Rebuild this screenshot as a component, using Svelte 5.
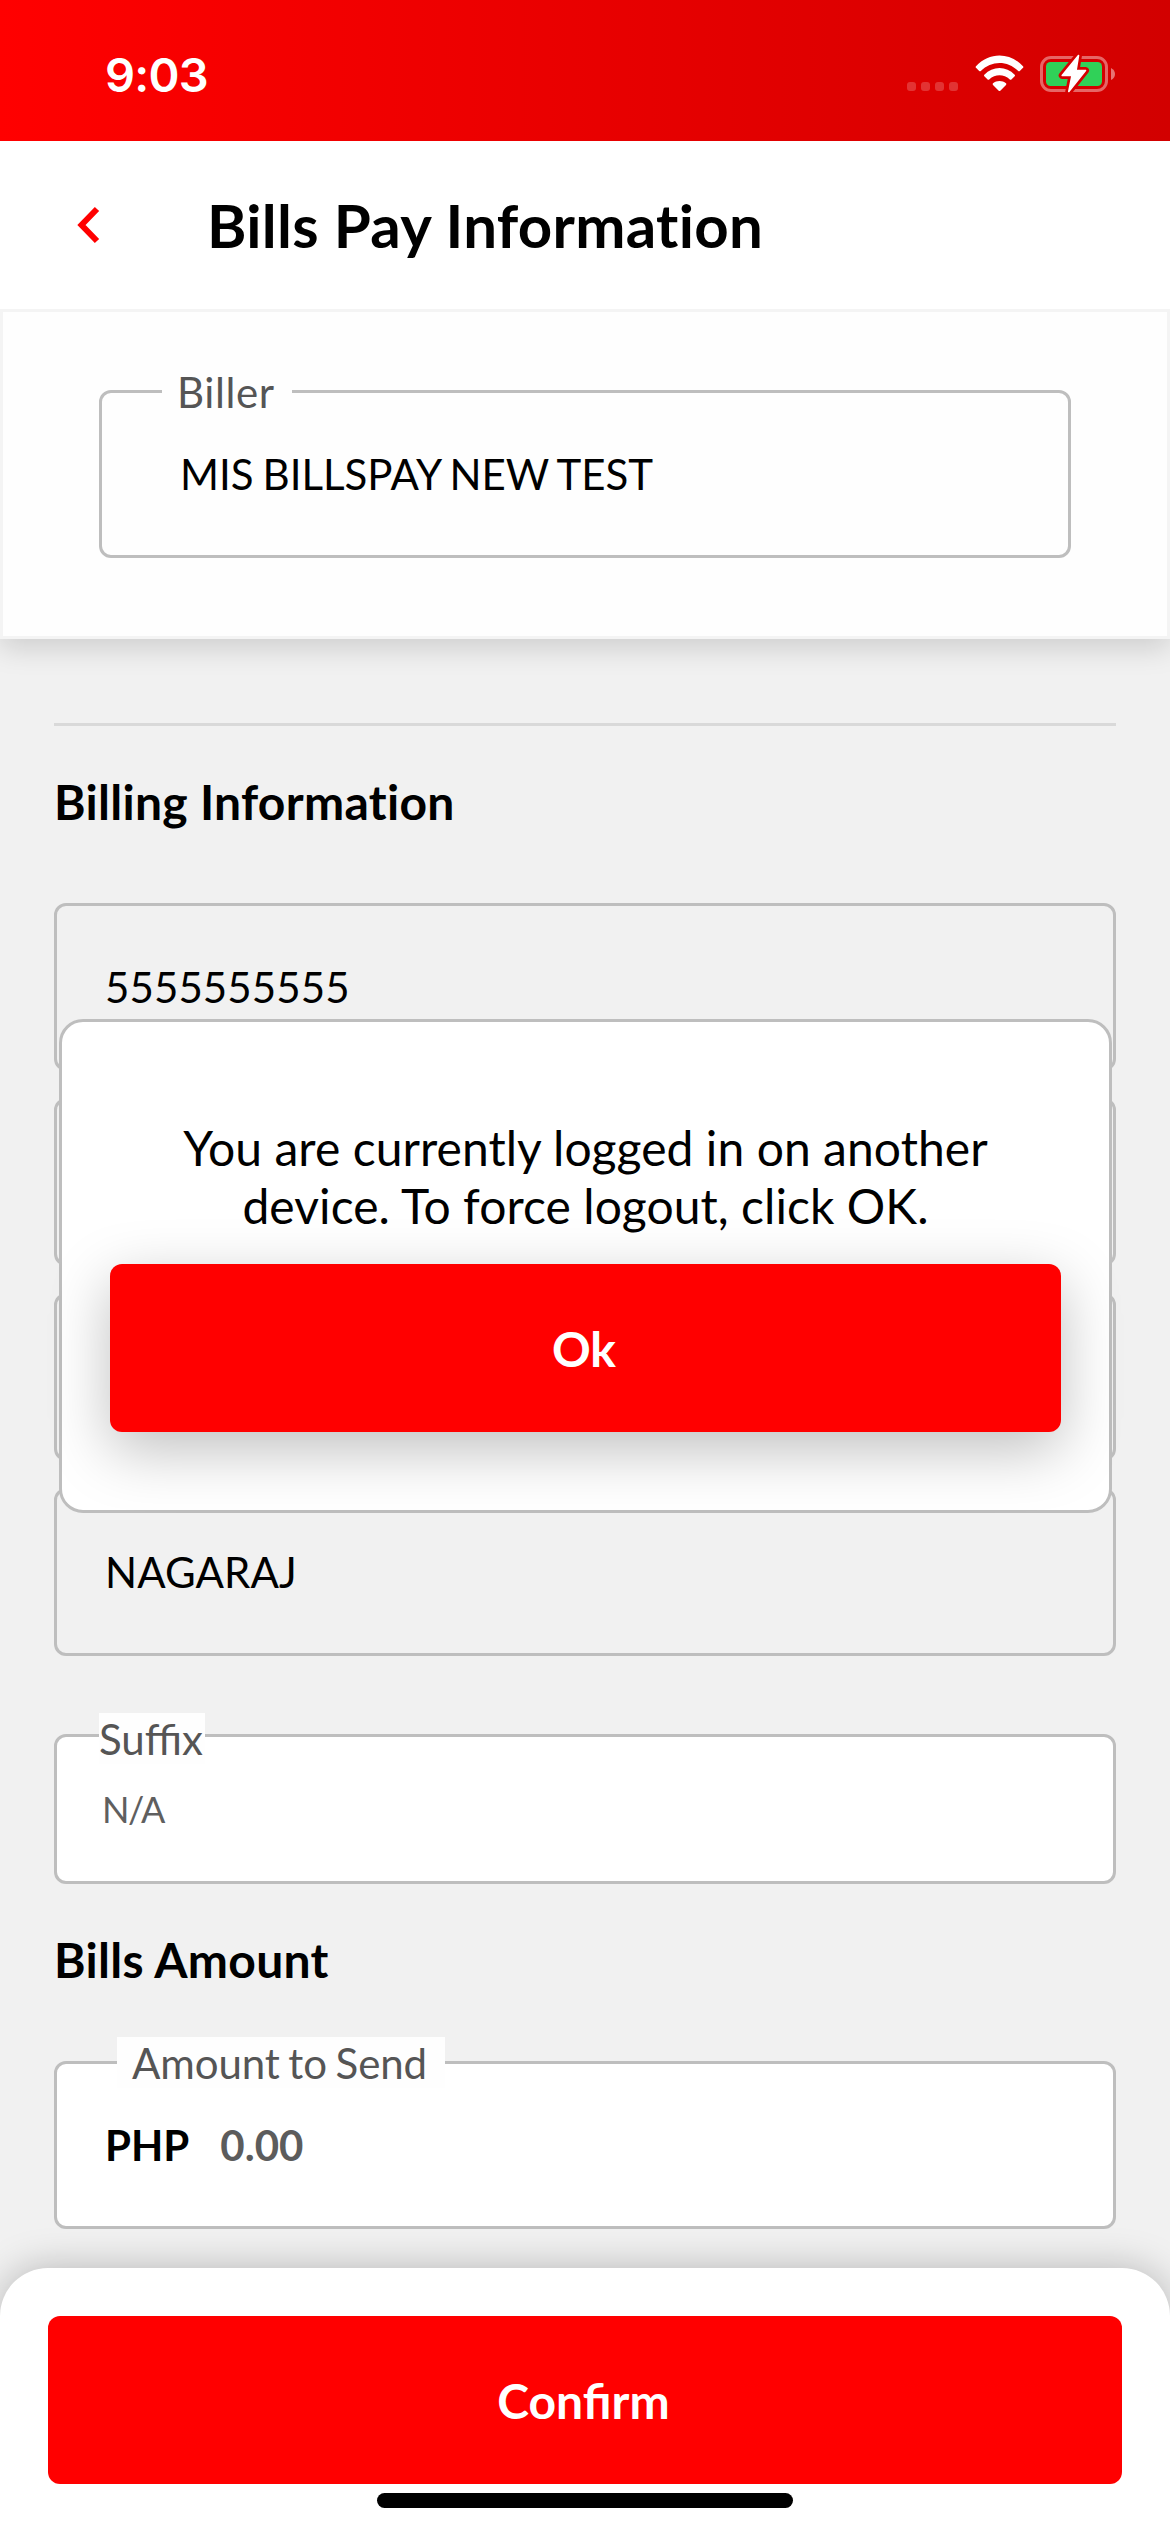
<script>
  const billing = ['5555555555', '', '', 'NAGARAJ'];
  const signalDots = [0, 1, 2, 3];
</script>

<div class="screen">
  <div class="status">
    <span class="time">9:03</span>
    <div class="indicators">
      <div class="signal">
        {#each signalDots as dot (dot)}<i></i>{/each}
      </div>
      <svg class="wifi" width="49" height="37" viewBox="0 0 49 37" fill="#fff">
        <path d="M1 11.2 C14 -3.2 35 -3.2 48 11.2 Q48.8 12 48 12.8 L44.8 16 Q44 16.7 43.2 15.9 C32.5 5.2 16.5 5.2 5.8 15.9 Q5 16.7 4.2 16 L1 12.8 Q.2 12 1 11.2Z" />
        <path d="M9.3 19.7 C17.7 10.8 31.3 10.8 39.7 19.7 Q40.4 20.5 39.7 21.2 L36.4 24.4 Q35.6 25.1 34.8 24.4 C28.8 18.9 20.2 18.9 14.2 24.4 Q13.4 25.1 12.6 24.4 L9.3 21.2 Q8.6 20.5 9.3 19.7Z" />
        <path d="M18 28.3 C21.6 25.1 27.4 25.1 31 28.3 Q31.8 29.1 31 29.9 L25.3 35.7 Q24.5 36.4 23.7 35.7 L18 29.9 Q17.2 29.1 18 28.3Z" />
      </svg>
      <svg class="battery" width="76" height="40" viewBox="0 0 76 40">
        <defs>
          <mask id="bolt-gap">
            <rect width="76" height="40" fill="#fff" />
            <path d="M38.5 2.5 L22.2 22.5 H32 L28.8 38.5 L45.5 17.5 H36 Z" fill="#000" stroke="#000" stroke-width="7" stroke-linejoin="round" />
          </mask>
        </defs>
        <g mask="url(#bolt-gap)">
          <rect x="1.5" y="4.5" width="65" height="33" rx="9.5" fill="none" stroke="#fff" stroke-opacity=".4" stroke-width="3" />
          <rect x="6" y="9" width="56" height="24" rx="4.5" fill="#30d158" />
        </g>
        <path d="M71 15 Q75 17 75 21 Q75 25 71 27Z" fill="#fff" fill-opacity=".45" />
        <path d="M38.5 2.5 L22.2 22.5 H32 L28.8 38.5 L45.5 17.5 H36 Z" fill="#fff" stroke="#fff" stroke-width="1.6" stroke-linejoin="round" />
      </svg>
    </div>
  </div>

  <header>
    <svg class="back" width="24" height="38" viewBox="0 0 24 38" fill="none" stroke="#f00" stroke-width="6">
      <path d="M21 3 L5.5 19 L21 35" />
    </svg>
    <h1>Bills Pay Information</h1>
  </header>

  <section class="biller">
    <div class="field">
      <span class="label">Biller</span>
      <span class="value">MIS BILLSPAY NEW TEST</span>
    </div>
  </section>

  <main>
    <hr />
    <h2>Billing Information</h2>
    <div class="stack">
      {#each billing as value, index (index)}
        <div class="field"><span class="value">{value}</span></div>
      {/each}
    </div>
    <div class="field white suffix">
      <span class="label">Suffix</span>
      <span class="value">N/A</span>
    </div>
    <h2 class="amount-title">Bills Amount</h2>
    <div class="field white amount">
      <span class="label">Amount to Send</span>
      <span class="currency">PHP</span>
      <span class="zero">0.00</span>
    </div>
  </main>

  <footer>
    <button>Confirm</button>
    <div class="home"></div>
  </footer>

  <div class="modal" role="dialog">
    <p>You are currently logged in on another<br />device. To force logout, click OK.</p>
    <button>Ok</button>
  </div>
</div>

<style>
  :global(body) {
    margin: 0;
  }
  .screen,
  .screen * {
    box-sizing: border-box;
  }
  .screen {
    position: relative;
    display: flex;
    flex-direction: column;
    width: 1170px;
    height: 2532px;
    overflow: hidden;
    background: #f1f1f1;
    color: #000;
    font-family: Lato, sans-serif;
    font-size: 42px;
    line-height: 1.2;
  }
  .status {
    display: flex;
    justify-content: space-between;
    height: 141px;
    padding: 53px 54px 0 105px;
    background: linear-gradient(90deg, #f00, #d20000);
    color: #fff;
  }
  .time {
    font: 560 47px/44px Inter, sans-serif;
    letter-spacing: -0.8px;
  }
  .indicators {
    display: flex;
    align-items: flex-start;
  }
  .signal {
    display: flex;
    gap: 5px;
    margin: 29px 17px 0 0;
  }
  .signal i {
    width: 9px;
    height: 9px;
    border-radius: 3px;
    background: rgba(255, 255, 255, 0.2);
  }
  .wifi {
    margin: 2px 16px 0 0;
  }
  header {
    position: relative;
    z-index: 1;
    display: flex;
    align-items: center;
    height: 168px;
    padding-left: 76px;
    background: #fff;
  }
  .back {
    margin-right: 107px;
  }
  h1,
  h2,
  p {
    margin: 0;
  }
  h1,
  h2 {
    font-variant-ligatures: none;
    letter-spacing: 0.3px;
  }
  h1 {
    font-size: 60px;
    font-weight: 700;
    line-height: 72px;
  }
  .biller {
    height: 330px;
    padding: 78px 96px 0;
    border: 3px solid #f4f4f4;
    background: #fefefe;
    box-shadow: 0 9px 27px rgba(0, 0, 0, 0.15);
  }
  .field {
    position: relative;
    display: flex;
    align-items: center;
    height: 168px;
    padding-left: 48px;
    border: 3px solid #bebebe;
    border-radius: 12px;
  }
  .biller .field {
    padding-left: 78px;
    word-spacing: -1.8px;
  }
  .biller .label {
    padding-right: 17px;
    letter-spacing: 0.6px;
  }
  .white {
    background: #fff;
  }
  .label {
    position: absolute;
    top: -27px;
    left: 60px;
    height: 51px;
    padding: 1px 15px 0;
    background: #fefefe;
    color: #555;
    white-space: nowrap;
  }
  main {
    flex: 1;
    padding: 84px 54px 0;
  }
  hr {
    height: 3px;
    margin: 0;
    border: 0;
    background: #d9d9d9;
  }
  h2 {
    margin-top: 47px;
    font-size: 48px;
    font-weight: 700;
    line-height: 58px;
  }
  .stack {
    display: flex;
    flex-direction: column;
    gap: 27px;
    margin-top: 72px;
  }
  .stack .value {
    letter-spacing: 0.1px;
  }
  .suffix {
    height: 150px;
    margin-top: 78px;
    padding-left: 45px;
    font-size: 36px;
    color: #5f5f5f;
  }
  .suffix .value {
    padding-top: 1px;
    letter-spacing: -1.4px;
  }
  .suffix .label {
    top: -24px;
    left: 42px;
    padding: 1px 2px 0 0;
    font-size: 42px;
  }
  .amount-title {
    margin-top: 47px;
  }
  .amount {
    margin-top: 72px;
    font-weight: 700;
  }
  .amount .label {
    padding-right: 18px;
    font-weight: 400;
    letter-spacing: -0.1px;
    word-spacing: -2px;
  }
  .zero {
    margin-left: 31px;
    color: #5c5c5c;
  }
  button {
    display: block;
    width: 100%;
    height: 168px;
    padding: 1px 3px 0 0;
    border: 0;
    border-radius: 12px;
    background: #f00;
    color: #fff;
    font: 700 48px/58px Lato, sans-serif;
  }
  footer {
    position: relative;
    height: 264px;
    padding: 48px 48px 0;
    border-radius: 48px 48px 0 0;
    background: #fff;
    box-shadow: 0 0 39px rgba(0, 0, 0, 0.25);
  }
  .home {
    width: 416px;
    height: 15px;
    margin: 9px auto 0;
    border-radius: 8px;
    background: #000;
  }
  .modal {
    position: absolute;
    top: 1019px;
    left: 59px;
    width: 1053px;
    height: 494px;
    padding: 97px 48px 0;
    border: 3px solid #bebebe;
    border-radius: 24px;
    background: #fff;
  }
  .modal p {
    font-size: 48px;
    line-height: 57.5px;
    letter-spacing: 0.06px;
    text-align: center;
  }
  .modal button {
    margin-top: 30px;
    box-shadow: 0 18px 60px rgba(0, 0, 0, 0.25);
  }
</style>
